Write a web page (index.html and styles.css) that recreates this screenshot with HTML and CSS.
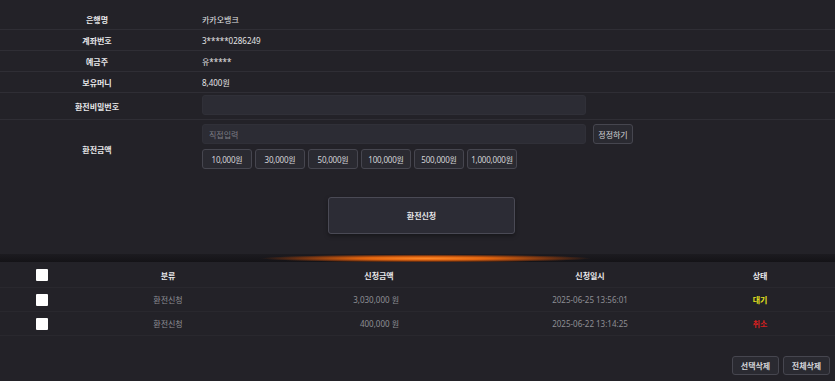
FILE: index.html
```html
<!DOCTYPE html>
<html lang="ko">
<head>
<meta charset="utf-8">
<link rel="stylesheet" href="styles.css">
</head>
<body>
<div class="page">
  <div class="form">
    <div class="row info"><div class="label">은행명</div><div class="value">카카오뱅크</div></div>
    <div class="row info"><div class="label">계좌번호</div><div class="value">3*****0286249</div></div>
    <div class="row info"><div class="label">예금주</div><div class="value">유*****</div></div>
    <div class="row info"><div class="label">보유머니</div><div class="value">8,400원</div></div>
    <div class="row pw"><div class="label">환전비밀번호</div><div class="value"><input class="field" type="password"></div></div>
    <div class="row amount">
      <div class="label">환전금액</div>
      <div class="value">
        <div class="line"><input class="field" type="text" placeholder="직접입력"><button class="btn small">정정하기</button></div>
        <div class="chips">
          <button class="btn chip">10,000원</button>
          <button class="btn chip">30,000원</button>
          <button class="btn chip">50,000원</button>
          <button class="btn chip">100,000원</button>
          <button class="btn chip">500,000원</button>
          <button class="btn chip">1,000,000원</button>
        </div>
      </div>
    </div>
  </div>
  <div class="submit-area"><button class="submit">환전신청</button></div>
  <div class="divider"></div>
  <div class="table">
    <div class="tr head">
      <div class="td"><span class="check"></span></div>
      <div class="td">분류</div>
      <div class="td">신청금액</div>
      <div class="td">신청일시</div>
      <div class="td status">상태</div>
    </div>
    <div class="tr">
      <div class="td"><span class="check"></span></div>
      <div class="td">환전신청</div>
      <div class="td money">3,030,000 원</div>
      <div class="td">2025-06-25 13:56:01</div>
      <div class="td status wait">대기</div>
    </div>
    <div class="tr">
      <div class="td"><span class="check"></span></div>
      <div class="td">환전신청</div>
      <div class="td money">400,000 원</div>
      <div class="td">2025-06-22 13:14:25</div>
      <div class="td status cancel">취소</div>
    </div>
  </div>
  <div class="actions">
    <button class="btn act">선택삭제</button>
    <button class="btn act">전체삭제</button>
  </div>
</div>
</body>
</html>
```
FILE: styles.css
```css
* { box-sizing: border-box; }
html, body { margin: 0; padding: 0; }
body {
  background: #232228;
  font-family: "Noto Sans", "Noto Sans CJK KR", sans-serif;
  font-size: 8px;
  color: #e2e2e4;
  width: 835px;
  height: 381px;
  overflow: hidden;
}
.page { display: flex; flex-direction: column; }
.form { padding-top: 9px; }
.row {
  display: grid;
  grid-template-columns: 194px 1fr;
  border-bottom: 1px solid #2f2e35;
}
.label {
  display: flex;
  align-items: center;
  justify-content: center;
  font-weight: 700;
  color: #e8e8ea;
}
.value {
  padding-left: 8px;
  display: flex;
  align-items: center;
  color: #e4e4e6;
}
.info { height: 21px; }
.pw .value { padding-top: 2px; padding-bottom: 4px; }
.field {
  width: 384px;
  height: 20px;
  background: #2c2c34;
  border: 1px solid #303038;
  border-radius: 3px;
  color: #ddd;
  font: inherit;
  padding: 0 6px;
  outline: none;
}
.field::placeholder { color: #7d7d85; }
.amount { border-bottom: none; }
.amount .value {
  flex-direction: column;
  align-items: flex-start;
  padding-top: 4px;
  padding-bottom: 9px;
}
.line { display: flex; gap: 7px; }
.line .field { height: 20px; }
.chips { display: flex; gap: 3px; margin-top: 5px; }
.btn {
  font: inherit;
  color: #d4d4d8;
  background: #2a2a31;
  border: 1px solid #46464f;
  border-radius: 3px;
  padding: 0;
  cursor: pointer;
  white-space: nowrap;
}
.small { width: 40px; height: 20px; }
.chip { height: 20px; width: 50px; padding: 0; letter-spacing: -0.2px; }
.submit-area {
  display: flex;
  justify-content: center;
  padding: 19px 0 20px 8px;
}
.submit {
  width: 187px;
  height: 37px;
  background: #2c2c35;
  border: 1px solid #4a4a55;
  border-radius: 3px;
  color: #e6e6e8;
  font: inherit;
  font-weight: 700;
  box-shadow: 0 2px 4px rgba(0,0,0,0.35);
}
.divider {
  height: 8px;
  background:
    radial-gradient(ellipse 165px 4px at 51% 55%, #ff8a2a 0%, #e0640f 40%, rgba(190,75,10,0.55) 75%, rgba(0,0,0,0) 100%),
    linear-gradient(#1c1b20, #141317);
}
.table { display: flex; flex-direction: column; margin-top: 1px; }
.tr {
  display: grid;
  grid-template-columns: 84px 168px 254px 168px 1fr;
  height: 24px;
  border-bottom: 1px solid #29282e;
  color: #8e8e94;
}
.tr.head { color: #eaeaec; font-weight: 700; height: 25px; }
.td {
  display: flex;
  align-items: center;
  justify-content: center;
}
.td.money { justify-content: flex-end; padding-right: 107px; }
.td.status { padding-left: 11px; font-weight: 700; }
.wait { color: #e3e31c; }
.cancel { color: #d42020; }
.check {
  width: 12px;
  height: 12px;
  background: #fff;
  border-radius: 1px;
  display: block;
}
.actions {
  display: flex;
  justify-content: flex-end;
  gap: 4px;
  padding-right: 5px;
  margin-top: 20px;
}
.act { width: 47px; height: 19px; font-weight: 700; }
```
